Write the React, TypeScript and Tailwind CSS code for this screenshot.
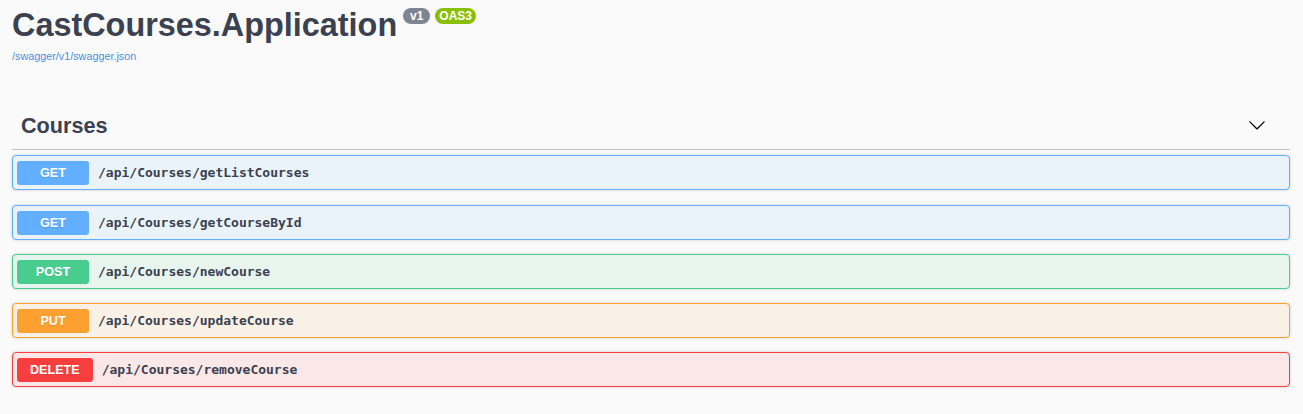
import React from "react";

const ops = [
  { m: "GET", path: "/api/Courses/getListCourses", badge: "bg-[#61affe]", border: "border-[#61affe]", bg: "bg-[#ebf3fa]", mt: "mt-0" },
  { m: "GET", path: "/api/Courses/getCourseById", badge: "bg-[#61affe]", border: "border-[#61affe]", bg: "bg-[#ebf3fa]", mt: "mt-[15px]" },
  { m: "POST", path: "/api/Courses/newCourse", badge: "bg-[#49cc90]", border: "border-[#49cc90]", bg: "bg-[#e8f5ef]", mt: "mt-[14px]" },
  { m: "PUT", path: "/api/Courses/updateCourse", badge: "bg-[#fca130]", border: "border-[#fca130]", bg: "bg-[#faf1e6]", mt: "mt-[14px]" },
  { m: "DELETE", path: "/api/Courses/removeCourse", badge: "bg-[#f93e3e]", border: "border-[#f93e3e]", bg: "bg-[#fae7e7]", mt: "mt-[14px]" },
];

export default function App() {
  return (
    <div className="min-h-[414px] bg-[#fafafa] pl-[12px] pr-[13px] text-[#3b4151]" style={{ fontFamily: '"Liberation Sans", Arial, sans-serif' }}>
      <div className="h-[103px]">
        <div className="flex items-start pt-[7px]">
          <h2 className="text-[32.4px] leading-[36px] font-bold text-[#3b4151] m-0">CastCourses.Application</h2>
          <div className="flex gap-[5px] ml-[6px] mt-[1px]">
            <span className="w-[27px] h-[16px] rounded-full bg-[#7d8492] text-white text-[12px] font-bold leading-[16px] text-center">v1</span>
            <span className="w-[41px] h-[16px] rounded-full bg-[#89bf04] text-white text-[12px] font-bold leading-[16px] text-center">OAS3</span>
          </div>
        </div>
        <a className="block mt-[6px] text-[10.8px] leading-[14px] text-[#4990e2]">/swagger/v1/swagger.json</a>
      </div>
      <div className="flex items-center justify-between h-[47px] border-b border-[rgba(59,65,81,0.3)] pl-[9px] pr-[24px]">
        <span className="text-[21.6px] font-bold text-[#3b4151]">Courses</span>
        <svg width="18" height="18" viewBox="0 0 20 20" className="mt-[-2px]">
          <path fill="#000" d="M17.418 6.109c.272-.268.709-.268.979 0s.271.701 0 .969l-7.908 7.83c-.27.268-.707.268-.979 0l-7.908-7.83c-.27-.268-.27-.701 0-.969.271-.268.709-.268.979 0L10 13.25l7.418-7.141z" />
        </svg>
      </div>
      <div className="pt-[5px] flex flex-col">
        {ops.map((o, i) => (
          <div key={i} className={`flex items-center h-[35px] px-[4px] border rounded-[4px] shadow-[0_0_3px_rgba(0,0,0,0.19)] ${o.mt} ${o.border} ${o.bg}`}>
            <span className={`min-w-[72px] h-[24px] px-[13px] rounded-[3px] text-white text-[12.6px] font-bold leading-[24px] text-center [text-shadow:0_1px_0_rgba(0,0,0,0.1)] ${o.badge}`}>{o.m}</span>
            <span className="ml-[9px] text-[13px] font-bold text-[#3b4151]" style={{ fontFamily: '"DejaVu Sans Mono", monospace' }}>{o.path}</span>
          </div>
        ))}
      </div>
    </div>
  );
}
